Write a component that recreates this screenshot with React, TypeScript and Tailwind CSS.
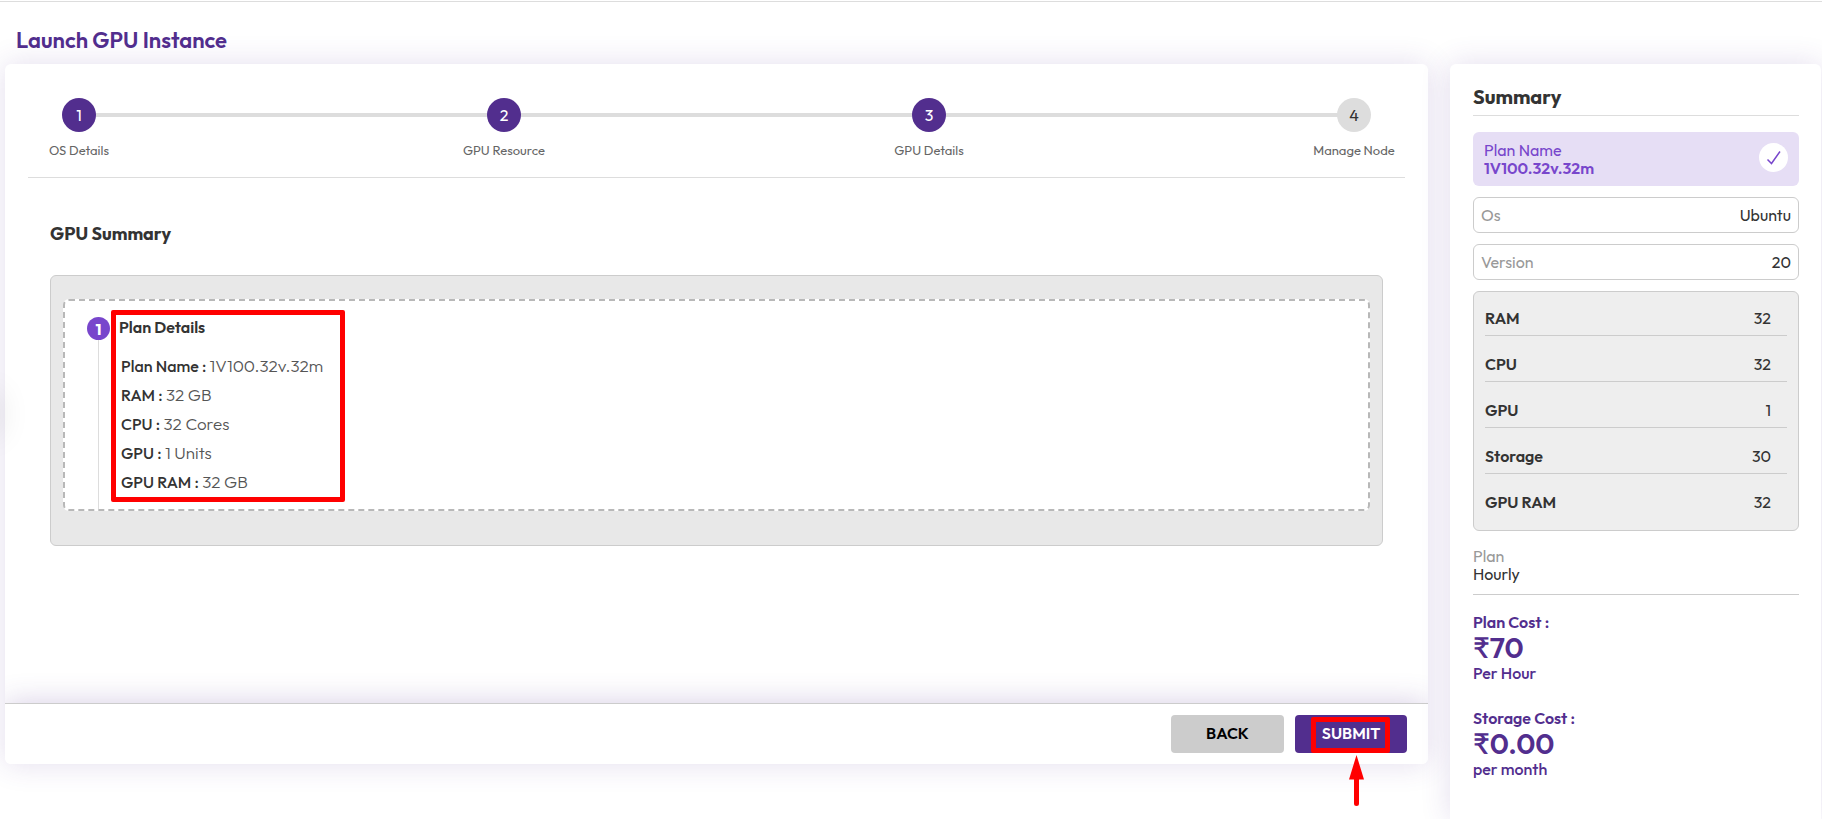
import React from 'react';

interface Step {
  label: string;
  done: boolean;
}

interface Detail {
  label: string;
  value: string;
}

interface Cost {
  title: string;
  amount: string;
  period: string;
}

const steps: Step[] = [
  { label: 'OS Details', done: true },
  { label: 'GPU Resource', done: true },
  { label: 'GPU Details', done: true },
  { label: 'Manage Node', done: false },
];

const planDetails: Detail[] = [
  { label: 'Plan Name :', value: '1V100.32v.32m' },
  { label: 'RAM :', value: '32 GB' },
  { label: 'CPU :', value: '32 Cores' },
  { label: 'GPU :', value: '1 Units' },
  { label: 'GPU RAM :', value: '32 GB' },
];

const image: Detail[] = [
  { label: 'Os', value: 'Ubuntu' },
  { label: 'Version', value: '20' },
];

const resources: Detail[] = [
  { label: 'RAM', value: '32' },
  { label: 'CPU', value: '32' },
  { label: 'GPU', value: '1' },
  { label: 'Storage', value: '30' },
  { label: 'GPU RAM', value: '32' },
];

const costs: Cost[] = [
  { title: 'Plan Cost :', amount: '₹70', period: 'Per Hour' },
  { title: 'Storage Cost :', amount: '₹0.00', period: 'per month' },
];

const Stepper: React.FC = () => (
  <div className="relative border-b border-[#dddddd] pb-[17px]">
    <div className="absolute left-[51px] right-[51px] top-[15px] h-1 bg-[#dddddd]" />
    <ol className="relative flex justify-between">
      {steps.map((step, index) => (
        <li key={step.label} className="flex w-[102px] flex-col items-center">
          <span
            className={`flex h-[34px] w-[34px] items-center justify-center rounded-full text-base leading-5 ${
              step.done ? 'bg-[#522e8e] text-white' : 'bg-[#dddddd] text-[#333333]'
            }`}
          >
            {index + 1}
          </span>
          <span className="mt-2 whitespace-nowrap text-[13px] leading-5 text-[#666666]">{step.label}</span>
        </li>
      ))}
    </ol>
  </div>
);

const PlanDetails: React.FC = () => (
  <div className="rounded-md border border-[#cccccc] bg-[#e8e8e8] px-3 pb-[34px] pt-[23px]">
    <div className="flex rounded-md border-2 border-dashed border-[#b8b8b8] bg-white pl-[22px]">
      <div className="flex w-[23px] flex-col items-center pt-4">
        <span className="flex h-[23px] w-[23px] items-center justify-center rounded-full bg-[#7846cc] text-base font-bold leading-5 text-white">
          1
        </span>
        <div className="w-px flex-1 bg-[#dddddd]" />
      </div>
      <div className="relative ml-[9px] pb-[13px] pt-[14px]">
        {/* Highlight */}
        <div className="pointer-events-none absolute -left-2 top-[9px] bottom-[7px] w-[234px] rounded-xs border-5 border-[#ff0000]" />
        <h3 className="text-base font-semibold leading-6 text-[#333333]">Plan Details</h3>
        <ul className="mt-3 pl-0.5">
          {planDetails.map((item) => (
            <li key={item.label} className="h-[29px] text-base leading-[29px] text-[#333333]">
              <span className="font-medium">{item.label}</span>{' '}
              <span className="text-[17px] font-light text-[#555555]">{item.value}</span>
            </li>
          ))}
        </ul>
      </div>
    </div>
  </div>
);

const Footer: React.FC = () => (
  <div className="relative">
    {/* Shadow cast upwards only */}
    <div className="absolute inset-0 shadow-[0_0_30px_rgba(82,46,142,0.24)] [clip-path:inset(-40px_0_0_0)]" />
    <div className="relative flex justify-end gap-[11px] rounded-b-md border-t border-[#cccccc] bg-white py-[11px] pr-[21px]">
      <button
        type="button"
        className="h-[38px] w-[113px] rounded-sm bg-[#cccccc] pb-0.5 text-base font-semibold text-black"
      >
        BACK
      </button>
      <button
        type="button"
        className="relative h-[38px] w-28 rounded-sm bg-[#522e8e] pb-0.5 text-base font-semibold text-white"
      >
        SUBMIT
        {/* Highlight and pointer */}
        <span className="pointer-events-none absolute left-4 top-0.5 h-9 w-[79px] rounded-xs border-5 border-[#ff0000]" />
        <svg className="absolute left-[54px] top-10 h-[51px] w-[15px]" viewBox="0 0 15 51" fill="#ff0000">
          <path d="M7.5 0L15 24.5H10V48.5a2.5 2.5 0 0 1-5 0V24.5H0z" />
        </svg>
      </button>
    </div>
  </div>
);

const Summary: React.FC = () => (
  <aside className="relative w-[371px] shrink-0 rounded-t-md bg-white pl-[23px] pr-[22px] pt-[19px] shadow-[0_0_30px_rgba(82,46,142,0.16)]">
    <h2 className="border-b border-[#dddddd] pb-1 text-xl font-bold leading-7 text-[#333333]">Summary</h2>

    <div className="mt-4 flex items-start justify-between rounded-md bg-[#e6def5] py-[9px] pl-[11px] pr-[11px] text-base leading-[18px] text-[#7846cc]">
      <div>
        <p>Plan Name</p>
        <p className="font-semibold">1V100.32v.32m</p>
      </div>
      <span className="mt-0.5 flex h-[29px] w-[29px] items-center justify-center rounded-full bg-white">
        <svg className="h-4 w-4" viewBox="0 0 16 16" fill="none" stroke="currentColor" strokeWidth="1.5">
          <path d="M1.5 9.5l4 4L14 1.5" />
        </svg>
      </span>
    </div>

    <dl>
      {image.map((item) => (
        <div
          key={item.label}
          className="mt-[11px] flex h-9 items-center justify-between rounded-md border border-[#cccccc] px-[7px] text-base"
        >
          <dt className="text-[#999999]">{item.label}</dt>
          <dd className="text-[#333333]">{item.value}</dd>
        </div>
      ))}
    </dl>

    <dl className="mt-[11px] rounded-md border border-[#cccccc] bg-[#eeeeee] px-[11px] pb-[11px] text-base leading-5 text-[#333333]">
      {resources.map((item) => (
        <div
          key={item.label}
          className="flex items-end justify-between border-b border-[#cccccc] pb-[7px] pr-4 pt-[18px] first:pt-4 last:border-b-0"
        >
          <dt className="font-semibold">{item.label}</dt>
          <dd>{item.value}</dd>
        </div>
      ))}
    </dl>

    <div className="mt-4 border-b border-[#cccccc] pb-[11px] text-base leading-[18px]">
      <p className="text-[#999999]">Plan</p>
      <p className="text-[#333333]">Hourly</p>
    </div>

    <div className="flex flex-col gap-[27px] py-[18px]">
      {costs.map((cost) => (
        <div key={cost.title} className="text-base font-medium leading-[18px] text-[#522e8e]">
          <p className="font-semibold">{cost.title}</p>
          <p className="text-[29px] font-semibold leading-[33px]">{cost.amount}</p>
          <p>{cost.period}</p>
        </div>
      ))}
    </div>
  </aside>
);

const App: React.FC = () => {
  return (
    <div className="relative min-h-screen overflow-hidden bg-white pt-px font-['Outfit','Lato',sans-serif]">
      <div className="flex min-h-screen flex-col border-t border-[#dddddd]">
        <h1 className="px-4 pb-2 pt-[23px] text-[22px] font-semibold leading-[31px] text-[#522e8e]">
          Launch GPU Instance
        </h1>
        <div className="flex flex-1 gap-[22px] pl-[5px] pr-px">
          <main className="relative flex min-w-0 flex-1 flex-col self-start rounded-md bg-white shadow-[0_0_30px_rgba(82,46,142,0.16)]">
            <div className="px-[23px] pt-[34px]">
              <Stepper />
            </div>
            <section className="min-h-[525px] px-[45px] pt-[43px]">
              <h2 className="mb-7 text-lg font-bold leading-[26px] text-[#333333]">GPU Summary</h2>
              <PlanDetails />
            </section>
            <Footer />
          </main>
          <Summary />
        </div>
      </div>
      {/* Shadow of the collapsed side menu's handle */}
      <div className="absolute -left-5 top-[390px] h-12 w-5 rounded-full shadow-[0_0_30px_rgba(0,0,0,0.1)]" />
    </div>
  );
};

export default App;
